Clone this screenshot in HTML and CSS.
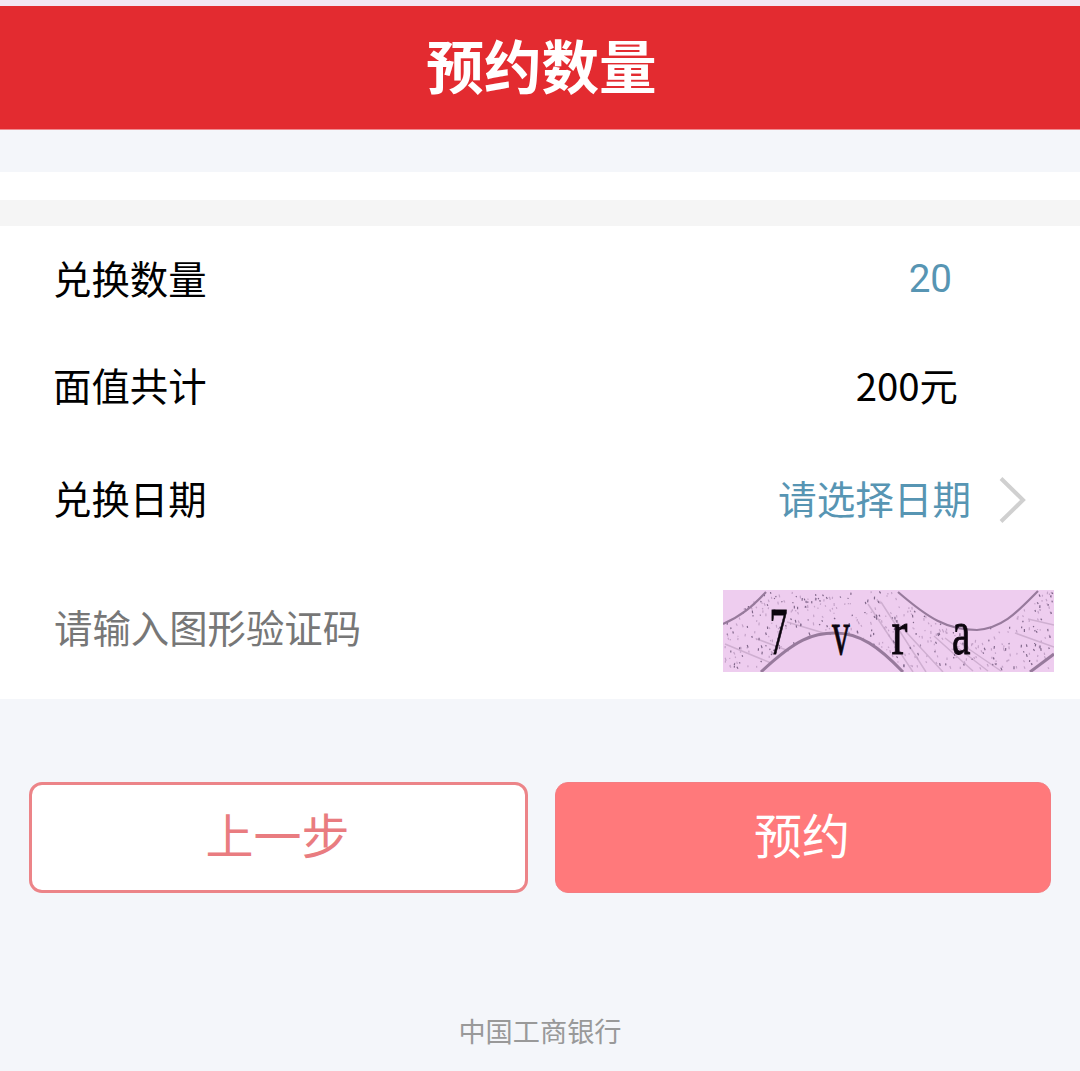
FILE: index.html
```html
<!DOCTYPE html>
<html lang="zh-CN">
<head>
<meta charset="utf-8">
<title>预约数量</title>
<link rel="stylesheet" href="styles.css">
</head>
<body>
<header class="header"><h1 class="title">预约数量</h1></header>
<div class="notice"></div>
<main class="form">
  <div class="row row-count"><span class="label">兑换数量</span><span class="count">20</span></div>
  <div class="row row-total"><span class="label">面值共计</span><span class="total">200元</span></div>
  <div class="row row-date"><span class="label">兑换日期</span><span class="date">请选择日期</span>
    <svg class="chevron" width="28" height="46" viewBox="0 0 28 46"><path d="M2 1.5 24 23 2 44.5"/></svg>
  </div>
  <div class="row row-code"><span class="placeholder">请输入图形验证码</span>
    <svg class="captcha" width="331" height="82" viewBox="0 0 331 82">
      <rect class="captcha-bg" width="331" height="82"/>
      <g class="scratches">
        <path d="M2 54 48 73M34 49 66 61M64 32 104 44M145 14 190 82M158 12 203 82M172 30 220 82M211 46 250 81M222 48 265 81M237 53 278 81M305 29 331 35M292 43 331 57"/>
      </g>
      <path class="dots light" id="lightDots"/>
      <path class="dots" id="darkDots"/>
      <path class="wave" d="M0 34C18 26 29 17 43 2"/>
      <path class="wave thick" d="M38 82C73 49 90 43 112 43C137 43 156 57 180 82"/>
      <path class="wave" d="M175 2C205 28 224 40 254 40C281 38 296 20 315 1"/>
      <path class="wave thick" d="M307 82 331 64"/>
      <g class="letters">
        <text class="digit" transform="translate(46.500 64) scale(.53 1)">7</text>
        <text transform="translate(109 63.500) scale(.56 1)">v</text>
        <text transform="translate(168.500 63.500) scale(.76 1)">r</text>
        <text transform="translate(229 63.500) scale(.66 1)">a</text>
      </g>
    </svg>
  </div>
</main>
<div class="actions">
  <button class="btn back">上一步</button>
  <button class="btn submit">预约</button>
</div>
<footer class="footer">中国工商银行</footer>
<script src="captcha.js"></script>
</body>
</html>
```
FILE: styles.css
```css
* { box-sizing: border-box; }
body {
  margin: 0;
  height: 1071px;
  background: #f4f6fa;
  font-family: "Noto Sans CJK SC", sans-serif;
  font-size: 38.4px;
  color: #000;
  overflow: hidden;
}
.header {
  height: 130px;
  border-top: 6px solid #f3e6f2;
  border-bottom: 1px solid #ef8b90;
  background: #e32b30;
  display: flex;
  align-items: center;
  justify-content: center;
}
.title {
  margin: 0;
  padding: 0 0 8px 3px;
  font-size: 57.6px;
  line-height: 80px;
  font-weight: 700;
  color: #fff;
}
.notice {
  height: 28px;
  margin-top: 42px;
  background: #fff;
}
.form {
  border-top: 26px solid #f5f5f5;
  background: #fff;
  height: 499px;
}
.row {
  display: flex;
  align-items: center;
  justify-content: space-between;
  padding-left: 53px;
  line-height: 56px;
}
.row-count { height: 102px; padding-right: 128px; }
.row-total { height: 112px; padding-right: 122px; }
.row-date { height: 114px; padding-right: 53px; }
.row-code { height: 140px; padding-right: 26px; }
.placeholder { color: #777; padding: 4px 0 0 1px; }
.count { font-family: Roboto, sans-serif; font-size: 38.6px; color: #5795b3; padding-top: 4px; }
.date { font-size: 38.6px; color: #5795b3; margin-left: auto; margin-right: 28px; }
.chevron { fill: none; stroke: #d0d0d0; stroke-width: 4; margin-top: 5px; }
.captcha { margin-top: 13px; }
.captcha-bg { fill: #eecdef; }
.scratches { fill: none; stroke: #cfafd1; stroke-width: 1.5; }
.dots { fill: none; stroke: #80678a; stroke-width: 1.2; }
.light { stroke: #c4a3c8; }
.wave { fill: none; stroke: #977a9c; stroke-width: 2.2; }
.thick { stroke-width: 3; }
.letters { font: 63px "Liberation Serif", serif; fill: #0c050e; stroke: #0c050e; stroke-width: .9; }
.digit { font-size: 68px; }
.actions {
  display: grid;
  grid-template-columns: 499px 496px;
  gap: 27px;
  padding: 83px 29px 0;
}
.btn {
  height: 111px;
  margin: 0;
  padding: 0 2px 10px 0;
  border-radius: 13px;
  font: 400 48px/70px "Noto Sans CJK SC", sans-serif;
}
.back { background: #fff; border: 3px solid #ec8488; color: #e97c80; }
.submit { background: #ff797b; border: 1px solid #f47c81; color: #fff; }
.footer {
  margin-top: 117px;
  text-align: center;
  font-size: 27.2px;
  line-height: 40px;
  color: #999;
}
```
FILE: captcha.js
```js
// Scatter seeded speckles over the band between the captcha waves.
let seed = 37;
function rand() {
  seed = (seed * 16807) % 2147483647;
  return seed / 2147483647;
}
function insideBand(x, y) {
  if (x < 43 && y < 34 - x * 0.75) return false;
  if (x > 40 && x < 180 && y > 43 + Math.pow((x - 110) / 70, 2) * 38) return false;
  if (x > 175 && x < 315 && y < 40 - Math.pow((x - 247) / 70, 2) * 38) return false;
  return true;
}
function speckles(count) {
  let d = "";
  for (let i = 0; i < count; i++) {
    const x = rand() * 327 + 2;
    const y = rand() * 77 + 1;
    if (insideBand(x, y)) {
      d += `M${x.toFixed(1)} ${y.toFixed(1)}l${(rand() * 1.6 - 0.4).toFixed(1)} ${(1 + rand() * 2).toFixed(1)}`;
    }
  }
  return d;
}
document.getElementById("lightDots").setAttribute("d", speckles(420));
document.getElementById("darkDots").setAttribute("d", speckles(240));
```
